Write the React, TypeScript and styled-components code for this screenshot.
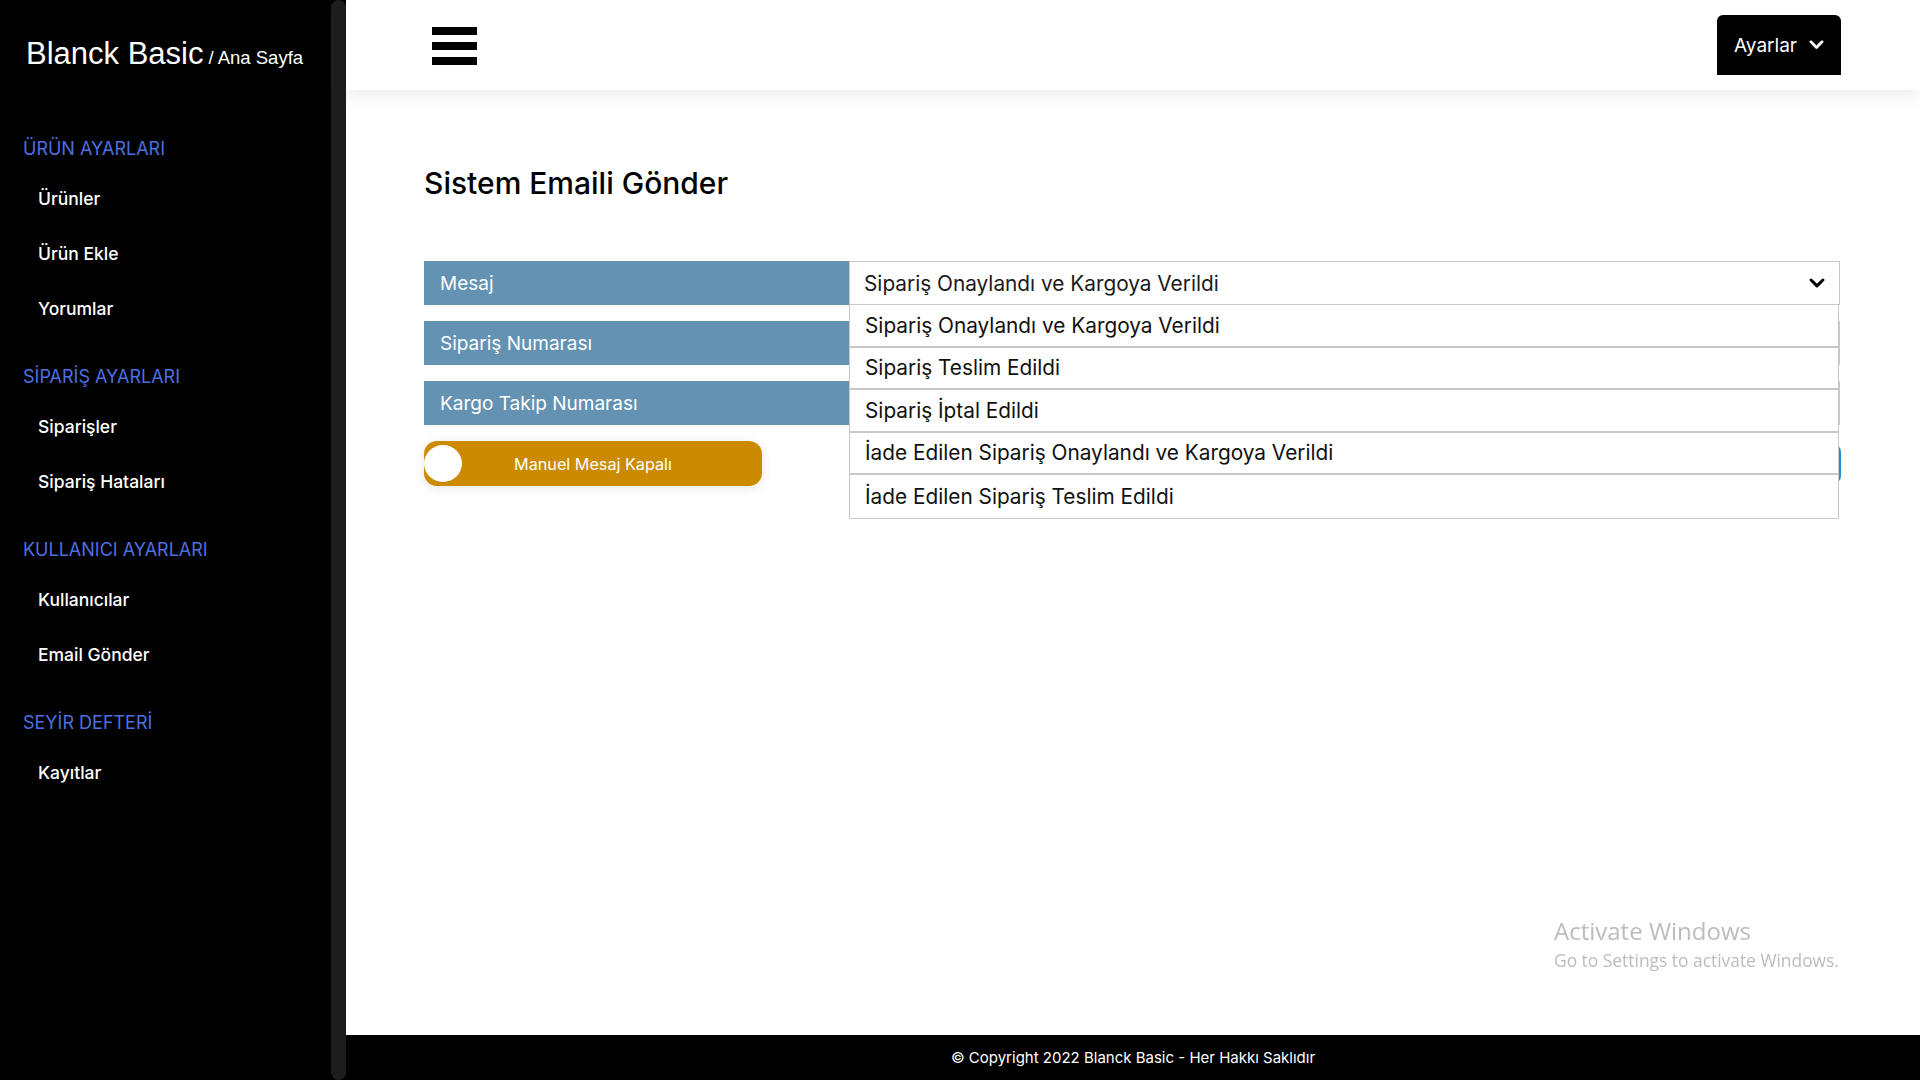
import React from "react";
import styled, { createGlobalStyle } from "styled-components";

const GlobalStyle = createGlobalStyle`
  html, body {
    margin: 0;
    padding: 0;
    background: #fff;
    font-family: Inter, "Noto Sans", sans-serif;
  }
  * { box-sizing: border-box; }
`;

type NavSection = { title: string; items: string[] };

const navSections: NavSection[] = [
  { title: "ÜRÜN AYARLARI", items: ["Ürünler", "Ürün Ekle", "Yorumlar"] },
  { title: "SİPARİŞ AYARLARI", items: ["Siparişler", "Sipariş Hataları"] },
  { title: "KULLANICI AYARLARI", items: ["Kullanıcılar", "Email Gönder"] },
  { title: "SEYİR DEFTERİ", items: ["Kayıtlar"] },
];

const messageOptions = [
  "Sipariş Onaylandı ve Kargoya Verildi",
  "Sipariş Teslim Edildi",
  "Sipariş İptal Edildi",
  "İade Edilen Sipariş Onaylandı ve Kargoya Verildi",
  "İade Edilen Sipariş Teslim Edildi",
];

const Page = styled.div`
  display: flex;
  height: 100vh;
  width: 100%;
  overflow: hidden;
`;

const Sidebar = styled.aside`
  width: 346px;
  flex-shrink: 0;
  display: flex;
  background: #000;
`;

const SideInner = styled.div`
  flex: 1;
  display: flex;
  flex-direction: column;
`;

const ScrollThumb = styled.div`
  width: 15px;
  background: #1e1c1c;
  border-radius: 8px;
`;

const Brand = styled.div`
  margin: 36px 0 0 26px;
  line-height: 36px;
  color: #fff;
  font-family: "Liberation Sans", Arial, sans-serif;
  font-size: 31px;
  white-space: nowrap;
`;

const BrandSub = styled.span`
  font-size: 18.5px;
  margin-left: 5px;
`;

const Nav = styled.nav`
  margin-top: 50px;
  display: flex;
  flex-direction: column;
  gap: 18px;
`;

const Section = styled.div`
  display: flex;
  flex-direction: column;
`;

const SectionTitle = styled.div`
  height: 45px;
  line-height: 45px;
  padding-left: 23px;
  color: #4f6fe0;
  font-size: 18px;
`;

const NavItem = styled.a`
  height: 55px;
  line-height: 55px;
  padding-left: 38px;
  color: #fff;
  font-size: 17.5px;
  font-weight: 500;
  text-decoration: none;
`;

const Main = styled.div`
  flex: 1;
  display: flex;
  flex-direction: column;
  min-width: 0;
`;

const Header = styled.header`
  height: 90px;
  flex-shrink: 0;
  display: flex;
  align-items: center;
  justify-content: space-between;
  padding: 0 79px 0 86px;
  background: #fff;
  box-shadow: 0 6px 16px rgba(0, 0, 0, 0.07);
  position: relative;
  z-index: 2;
`;

const Burger = styled.button`
  width: 45px;
  height: 38px;
  margin-top: 2px;
  padding: 0;
  border: none;
  background: transparent;
  display: flex;
  flex-direction: column;
  justify-content: space-between;
  cursor: pointer;
`;

const BurgerBar = styled.span`
  display: block;
  height: 8px;
  background: #000;
`;

const SettingsButton = styled.button`
  width: 124px;
  height: 60px;
  border: none;
  border-radius: 6px 6px 0 0;
  background: #000;
  color: #fff;
  display: flex;
  align-items: center;
  justify-content: center;
  gap: 12px;
  font-family: Inter, sans-serif;
  font-size: 19px;
  cursor: pointer;
`;

const Content = styled.main`
  flex: 1;
  padding: 75px 80px 0 78px;
`;

const Title = styled.h1`
  margin: 0;
  line-height: 36px;
  font-family: Inter, sans-serif;
  font-weight: 500;
  font-size: 30px;
  color: #000;
`;

const Form = styled.div`
  margin-top: 60px;
  display: flex;
  flex-direction: column;
  gap: 16px;
`;

const FieldRow = styled.div`
  display: grid;
  grid-template-columns: 425px 1fr;
  height: 44px;
`;

const FieldLabel = styled.div`
  background: #6392b3;
  color: #fff;
  font-size: 19px;
  display: flex;
  align-items: center;
  padding-left: 16px;
`;

const FieldInput = styled.div`
  border: 1px solid #cbc7c7;
  background: #fff;
`;

const SelectWrap = styled.div`
  position: relative;
`;

const SelectBox = styled.div`
  height: 44px;
  border: 1px solid #cbc7c7;
  display: flex;
  align-items: center;
  justify-content: space-between;
  padding: 0 14px 0 14px;
  font-size: 20.8px;
  color: #1a1a1a;
  background: #fff;
`;

const OptionList = styled.ul`
  position: absolute;
  top: 44px;
  left: 0;
  right: 1px;
  margin: 0;
  padding: 0;
  list-style: none;
  background: #fff;
  border: 1px solid #cbc7c7;
  border-top: none;
  z-index: 5;
`;

const OptionItem = styled.li`
  height: 42.5px;
  display: flex;
  align-items: center;
  padding-left: 15px;
  font-size: 20.8px;
  color: #111;
  border-bottom: 2px solid #cbc7c7;
  &:last-child {
    border-bottom: none;
  }
`;

const ToggleRow = styled.div`
  display: flex;
  align-items: center;
  justify-content: space-between;
  height: 45px;
`;

const Toggle = styled.button`
  width: 338px;
  height: 45px;
  border: none;
  border-radius: 13px;
  background: #cc8a00;
  box-shadow: 0 2px 12px rgba(0, 0, 0, 0.1);
  display: flex;
  align-items: center;
  padding: 0;
  cursor: pointer;
`;

const Knob = styled.span`
  width: 38px;
  height: 37px;
  border-radius: 50%;
  background: #fff;
  flex-shrink: 0;
`;

const ToggleText = styled.span`
  flex: 1;
  text-align: center;
  color: #fff;
  font-family: Inter, sans-serif;
  font-size: 16.2px;
  padding-right: 38px;
`;

const SendButton = styled.button`
  height: 40px;
  padding: 0 22px;
  border: none;
  border-radius: 8px;
  background: #1f8fd6;
  color: #fff;
  font-size: 17px;
  margin-right: -1px;
`;

const Footer = styled.footer`
  height: 45px;
  flex-shrink: 0;
  background: #000;
  color: #fff;
  display: flex;
  align-items: center;
  justify-content: center;
  font-size: 15px;
`;

const Watermark = styled.div`
  position: fixed;
  left: 1554px;
  top: 914px;
  color: #bfbbbb;
  font-family: "Open Sans", "Noto Sans", sans-serif;
  pointer-events: none;
`;

const WatermarkTitle = styled.div`
  font-size: 24px;
  line-height: 33px;
`;

const WatermarkSub = styled.div`
  font-size: 17.4px;
  line-height: 26px;
`;

const Chevron = ({ color, size }: { color: string; size: number }) => (
  <svg width={size} height={size * 0.62} viewBox="0 0 16 10" fill="none">
    <path
      d="M2 2l6 6 6-6"
      stroke={color}
      strokeWidth="3"
      strokeLinecap="round"
      strokeLinejoin="round"
    />
  </svg>
);

const App = (): JSX.Element => {
  return (
    <Page>
      <GlobalStyle />
      <Sidebar>
        <SideInner>
          <Brand>
            Blanck Basic<BrandSub>/ Ana Sayfa</BrandSub>
          </Brand>
          <Nav>
            {navSections.map((section) => (
              <Section key={section.title}>
                <SectionTitle>{section.title}</SectionTitle>
                {section.items.map((item) => (
                  <NavItem key={item} href="#">
                    {item}
                  </NavItem>
                ))}
              </Section>
            ))}
          </Nav>
        </SideInner>
        <ScrollThumb />
      </Sidebar>
      <Main>
        <Header>
          <Burger aria-label="menu">
            <BurgerBar />
            <BurgerBar />
            <BurgerBar />
          </Burger>
          <SettingsButton>
            Ayarlar
            <Chevron color="#fff" size={15} />
          </SettingsButton>
        </Header>
        <Content>
          <Title>Sistem Emaili Gönder</Title>
          <Form>
            <FieldRow>
              <FieldLabel>Mesaj</FieldLabel>
              <SelectWrap>
                <SelectBox>
                  <span>{messageOptions[0]}</span>
                  <Chevron color="#000" size={16} />
                </SelectBox>
                <OptionList>
                  {messageOptions.map((opt) => (
                    <OptionItem key={opt}>{opt}</OptionItem>
                  ))}
                </OptionList>
              </SelectWrap>
            </FieldRow>
            <FieldRow>
              <FieldLabel>Sipariş Numarası</FieldLabel>
              <FieldInput />
            </FieldRow>
            <FieldRow>
              <FieldLabel>Kargo Takip Numarası</FieldLabel>
              <FieldInput />
            </FieldRow>
            <ToggleRow>
              <Toggle>
                <Knob />
                <ToggleText>Manuel Mesaj Kapalı</ToggleText>
              </Toggle>
              <SendButton>Gönder</SendButton>
            </ToggleRow>
          </Form>
        </Content>
        <Footer>© Copyright 2022 Blanck Basic - Her Hakkı Saklıdır</Footer>
      </Main>
      <Watermark>
        <WatermarkTitle>Activate Windows</WatermarkTitle>
        <WatermarkSub>Go to Settings to activate Windows.</WatermarkSub>
      </Watermark>
    </Page>
  );
};

export default App;
